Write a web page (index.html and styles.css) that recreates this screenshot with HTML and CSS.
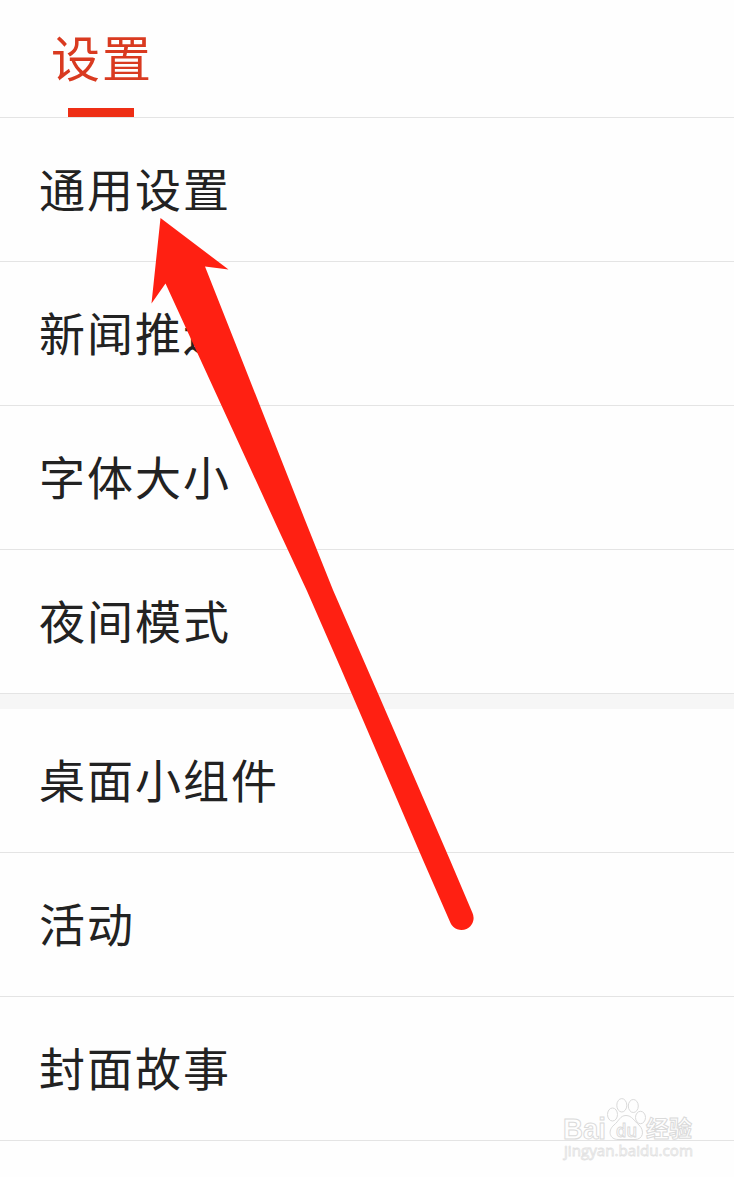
FILE: index.html
```html
<!DOCTYPE html>
<html lang="zh-CN">

<head>
    <meta charset="UTF-8">
    <meta name="viewport" content="width=device-width, initial-scale=1.0">
    <title>设置</title>
    <link rel="stylesheet" href="styles.css">
</head>

<body>
    <div class="page">
        <header class="header">
            <h1 class="title">设置</h1>
            <div class="title-line"></div>
        </header>

        <ul class="list">
            <li class="item">通用设置</li>
            <li class="item">新闻推送</li>
            <li class="item">字体大小</li>
            <li class="item">夜间模式</li>
        </ul>
        <ul class="list list-more">
            <li class="item">桌面小组件</li>
            <li class="item">活动</li>
            <li class="item">封面故事</li>
        </ul>

        <!-- 指向“通用设置”的箭头 -->
        <svg class="arrow" width="734" height="1177" viewBox="0 0 734 1177">
            <path d="M160.5 218 L228.5 269.5 L205 266.5 L238 350 L305 520 L333 590 L380 698 L450 860 L472.5 913 A12 12 0 0 1 450.5 923 L423 860 L363 720 L341.5 670 L307 591 L280 533 L165.5 283.5 L151.5 303.5 Z" />
        </svg>

        <!-- 水印 -->
        <svg class="watermark" width="150" height="80" viewBox="555 1090 150 80">
            <text class="brand" x="563" y="1138.5" textLength="43" lengthAdjust="spacingAndGlyphs">Bai</text>
            <ellipse cx="612.5" cy="1114.5" rx="5" ry="6.5" />
            <ellipse cx="621.8" cy="1105.3" rx="5" ry="6.7" />
            <ellipse cx="633.3" cy="1106" rx="5" ry="6.5" />
            <ellipse cx="640.5" cy="1117.5" rx="5" ry="6.2" />
            <path d="M626 1115.5 C620 1115.5 619 1121 614 1125 C607 1131 610 1139.5 618 1139.5 H635 C643 1139.5 645 1131 639 1125 C634 1121 632 1115.5 626 1115.5 Z" />
            <text class="du" x="616" y="1136.5" textLength="21" lengthAdjust="spacingAndGlyphs">du</text>
            <text class="jy" x="646" y="1137" textLength="46">经验</text>
            <text class="site" x="564" y="1156" textLength="129" lengthAdjust="spacingAndGlyphs">jingyan.baidu.com</text>
        </svg>
    </div>
</body>

</html>
```
FILE: styles.css
```css
* {
    box-sizing: border-box;
    margin: 0;
    padding: 0;
}

body {
    background: #fefefe;
    color: #222;
    font-family: "Noto Sans CJK SC", sans-serif;
}

.page {
    position: relative;
    height: 1177px;
    overflow: hidden;
}

.header {
    display: flex;
    flex-direction: column;
    justify-content: space-between;
    height: 118px;
    padding-top: 21px;
    border-bottom: 1px solid #e4e4e4;
}

.title {
    padding-left: 51px;
    color: #d93a20;
    font-size: 49px;
    font-weight: 400;
    line-height: 70px;
    letter-spacing: 2px;
}

.title-line {
    width: 66px;
    height: 9px;
    margin-left: 68px;
    background: #ee2e15;
}

.list {
    list-style: none;
}

.list-more {
    border-top: 15px solid #f6f6f6;
}

.item {
    height: 144px;
    padding-left: 39px;
    border-bottom: 1px solid #e4e4e4;
    font-size: 46px;
    line-height: 138px;
    letter-spacing: 2px;
}

.arrow {
    position: absolute;
    top: 0;
    left: 0;
    fill: #ff2012;
}

.watermark {
    position: absolute;
    top: 1090px;
    left: 555px;
    fill: #fefefe;
    stroke: #dadada;
    stroke-width: 1px;
    font-family: "Liberation Sans", "Noto Sans CJK SC", sans-serif;
}

.brand {
    font-size: 29px;
    font-weight: 700;
}

.du {
    font-family: "Open Sans", sans-serif;
    font-size: 18px;
    font-weight: 600;
}

.jy {
    font-family: "Noto Sans CJK SC", sans-serif;
    font-size: 23px;
    font-weight: 700;
}

.site {
    font-family: "Open Sans", sans-serif;
    font-size: 15px;
    stroke: #e2e2e2;
    stroke-width: 0.8px;
}
```
